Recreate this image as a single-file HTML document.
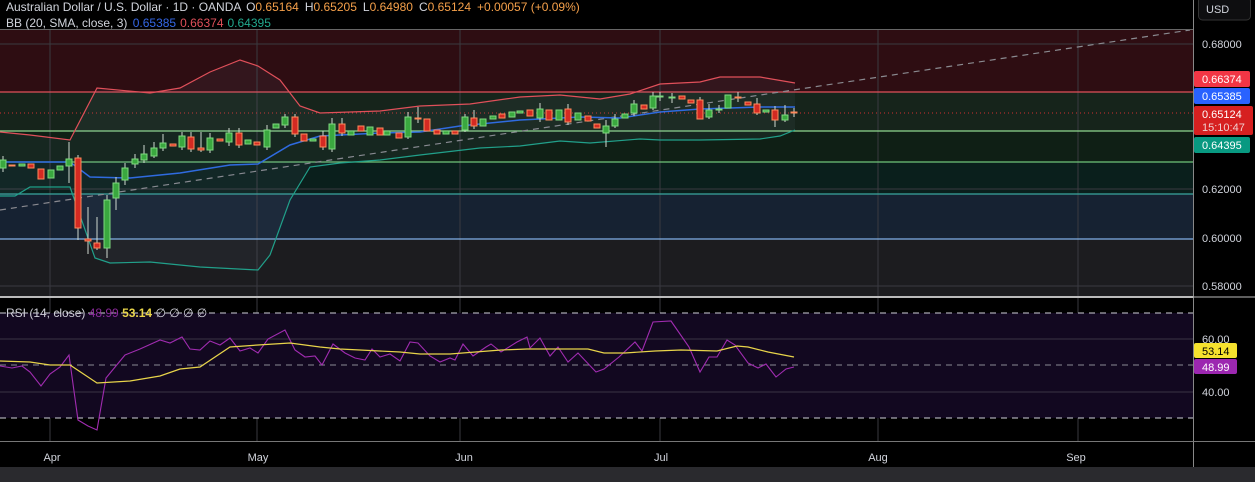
<!DOCTYPE html>
<html><head><meta charset="utf-8"><style>
html,body{margin:0;padding:0;background:#000;width:1255px;height:482px;overflow:hidden}
svg{display:block;font-family:"Liberation Sans",sans-serif}
</style></head><body>
<svg width="1255" height="482" viewBox="0 0 1255 482" xmlns="http://www.w3.org/2000/svg">
<rect width="1255" height="482" fill="#000"/>
<rect x="0" y="29" width="1193" height="63" fill="#2e0d12"/>
<rect x="0" y="92" width="1193" height="39" fill="#16241b"/>
<rect x="0" y="131" width="1193" height="31" fill="#0f1f15"/>
<rect x="0" y="162" width="1193" height="32" fill="#0a1f1c"/>
<rect x="0" y="194" width="1193" height="45" fill="#162232"/>
<rect x="0" y="239" width="1193" height="57" fill="#1c1c1f"/>
<g stroke="#3a3a40" stroke-width="1">
<line x1="50" y1="29" x2="50" y2="441"/><line x1="257" y1="29" x2="257" y2="441"/><line x1="460" y1="29" x2="460" y2="441"/><line x1="660" y1="29" x2="660" y2="441"/><line x1="878" y1="29" x2="878" y2="441"/><line x1="1078" y1="29" x2="1078" y2="441"/>
<line x1="0" y1="44" x2="1193" y2="44"/><line x1="0" y1="189" x2="1193" y2="189"/><line x1="0" y1="286" x2="1193" y2="286"/>
</g>
<line x1="0" y1="92" x2="1193" y2="92" stroke="#e0505a" stroke-width="1.2"/>
<line x1="0" y1="131" x2="1193" y2="131" stroke="#8fd88f" stroke-width="1.2"/>
<line x1="0" y1="162" x2="1193" y2="162" stroke="#6fc47a" stroke-width="1.2"/>
<line x1="0" y1="194" x2="1193" y2="194" stroke="#3aa7a0" stroke-width="1.2"/>
<line x1="0" y1="239" x2="1193" y2="239" stroke="#7fb0e8" stroke-width="1.2"/>
<line x1="0" y1="113" x2="1193" y2="113" stroke="#d03030" stroke-width="1" stroke-dasharray="1,3"/>
<line x1="0" y1="210" x2="1190" y2="30" stroke="#8a8a90" stroke-width="1.2" stroke-dasharray="6,5"/>
<polygon fill="rgba(120,140,160,0.08)" points="0,132 30,135 70,140 97,88 150,93 180,88 210,72 240,60 258,66 280,80 300,106 320,113 380,111 420,106 470,104 520,97 560,95 600,99 630,94 660,84 700,82 720,77 760,77 795,83 795,130 780,136 760,139 700,140 660,140 640,139 590,143 560,141 520,146 480,148 420,155 380,160 340,163 310,167 290,200 270,255 258,270 200,267 150,262 110,263 95,258 70,187 30,187 15,196 0,196"/>
<polyline fill="none" stroke="#e0505a" stroke-width="1.2" points="0,132 30,135 70,140 97,88 150,93 180,88 210,72 240,60 258,66 280,80 300,106 320,113 380,111 420,106 470,104 520,97 560,95 600,99 630,94 660,84 700,82 720,77 760,77 795,83"/>
<polyline fill="none" stroke="#2f6be0" stroke-width="1.5" points="0,162 70,162 90,177 130,178 180,173 230,165 258,164 290,145 320,136 380,133 420,132 460,126 520,120 580,117 620,118 660,112 700,109 760,107 795,107"/>
<polyline fill="none" stroke="#21a08a" stroke-width="1.2" points="0,196 15,196 30,187 70,187 95,258 110,263 150,262 200,267 258,270 270,255 290,200 310,167 340,163 380,160 420,155 480,148 520,146 560,141 590,143 640,139 660,140 700,140 760,139 780,136 795,130"/>
<g stroke-width="1">
<g stroke="#cfd8cf"><line x1="3" y1="156" x2="3" y2="172"/><line x1="69" y1="142" x2="69" y2="183"/><line x1="78" y1="155" x2="78" y2="240"/><line x1="88" y1="207" x2="88" y2="254"/><line x1="97" y1="217" x2="97" y2="250"/><line x1="107" y1="195" x2="107" y2="258"/><line x1="116" y1="177" x2="116" y2="210"/><line x1="125" y1="163" x2="125" y2="185"/><line x1="135" y1="154" x2="135" y2="168"/><line x1="144" y1="145" x2="144" y2="163"/><line x1="154" y1="142" x2="154" y2="158"/><line x1="163" y1="134" x2="163" y2="151"/><line x1="182" y1="132" x2="182" y2="150"/><line x1="191" y1="132" x2="191" y2="152"/><line x1="201" y1="132" x2="201" y2="152"/><line x1="210" y1="133" x2="210" y2="153"/><line x1="229" y1="128" x2="229" y2="146"/><line x1="239" y1="128" x2="239" y2="148"/><line x1="267" y1="125" x2="267" y2="150"/><line x1="285" y1="114" x2="285" y2="128"/><line x1="295" y1="114" x2="295" y2="137"/><line x1="323" y1="131" x2="323" y2="150"/><line x1="332" y1="118" x2="332" y2="152"/><line x1="342" y1="118" x2="342" y2="136"/><line x1="408" y1="112" x2="408" y2="139"/><line x1="418" y1="107" x2="418" y2="123"/><line x1="465" y1="114" x2="465" y2="132"/><line x1="474" y1="110" x2="474" y2="129"/><line x1="540" y1="103" x2="540" y2="122"/><line x1="568" y1="104" x2="568" y2="125"/><line x1="606" y1="120" x2="606" y2="147"/><line x1="615" y1="114" x2="615" y2="128"/><line x1="634" y1="100" x2="634" y2="116"/><line x1="653" y1="92" x2="653" y2="110"/><line x1="660" y1="92" x2="660" y2="101"/><line x1="672" y1="93" x2="672" y2="103"/><line x1="700" y1="97" x2="700" y2="119"/><line x1="709" y1="104" x2="709" y2="119"/><line x1="719" y1="105" x2="719" y2="113"/><line x1="738" y1="92" x2="738" y2="102"/><line x1="757" y1="98" x2="757" y2="115"/><line x1="775" y1="106" x2="775" y2="127"/><line x1="785" y1="105" x2="785" y2="122"/><line x1="794" y1="108" x2="794" y2="117"/></g>
<g fill="#3aa83f" stroke="#7fd97f">
<rect x="0" y="160" width="6" height="8"/><rect x="19" y="164" width="6" height="2"/><rect x="48" y="170" width="6" height="8"/><rect x="57" y="166" width="6" height="4"/><rect x="66" y="159" width="6" height="7"/><rect x="104" y="200" width="6" height="48"/><rect x="113" y="183" width="6" height="15"/><rect x="122" y="168" width="6" height="12"/><rect x="132" y="159" width="6" height="5"/><rect x="141" y="154" width="6" height="6"/><rect x="151" y="148" width="6" height="8"/><rect x="160" y="143" width="6" height="5"/><rect x="179" y="136" width="6" height="11"/><rect x="207" y="138" width="6" height="12"/><rect x="226" y="133" width="6" height="9"/><rect x="245" y="140" width="6" height="4"/><rect x="264" y="130" width="6" height="17"/><rect x="273" y="124" width="6" height="4"/><rect x="282" y="117" width="6" height="8"/><rect x="310" y="139" width="6" height="2"/><rect x="329" y="124" width="6" height="25"/><rect x="348" y="131" width="6" height="4"/><rect x="367" y="127" width="6" height="8"/><rect x="384" y="131" width="6" height="4"/><rect x="405" y="117" width="6" height="20"/><rect x="443" y="131" width="6" height="3"/><rect x="462" y="117" width="6" height="13"/><rect x="480" y="119" width="6" height="7"/><rect x="490" y="116" width="6" height="3"/><rect x="509" y="112" width="6" height="5"/><rect x="517" y="111" width="6" height="2"/><rect x="537" y="109" width="6" height="9"/><rect x="556" y="110" width="6" height="10"/><rect x="575" y="113" width="6" height="7"/><rect x="603" y="126" width="6" height="7"/><rect x="612" y="119" width="6" height="7"/><rect x="622" y="114" width="6" height="4"/><rect x="631" y="104" width="6" height="9"/><rect x="650" y="96" width="6" height="12"/><rect x="657" y="96" width="6" height="1"/><rect x="669" y="97" width="6" height="1"/><rect x="706" y="110" width="6" height="7"/><rect x="716" y="109" width="6" height="1"/><rect x="725" y="95" width="6" height="13"/><rect x="763" y="110" width="6" height="2"/><rect x="782" y="115" width="6" height="5"/>
</g>
<g fill="#d42a22" stroke="#ff8a5c">
<rect x="9" y="165" width="6" height="1"/><rect x="28" y="164" width="6" height="4"/><rect x="38" y="169" width="6" height="10"/><rect x="75" y="158" width="6" height="70"/><rect x="85" y="239" width="6" height="2"/><rect x="94" y="243" width="6" height="5"/><rect x="170" y="144" width="6" height="2"/><rect x="188" y="137" width="6" height="12"/><rect x="198" y="148" width="6" height="2"/><rect x="217" y="139" width="6" height="2"/><rect x="236" y="133" width="6" height="12"/><rect x="254" y="142" width="6" height="3"/><rect x="292" y="117" width="6" height="17"/><rect x="301" y="134" width="6" height="7"/><rect x="320" y="136" width="6" height="11"/><rect x="339" y="124" width="6" height="9"/><rect x="358" y="126" width="6" height="5"/><rect x="377" y="128" width="6" height="7"/><rect x="396" y="133" width="6" height="5"/><rect x="415" y="118" width="6" height="1"/><rect x="424" y="119" width="6" height="12"/><rect x="434" y="130" width="6" height="4"/><rect x="452" y="131" width="6" height="3"/><rect x="471" y="118" width="6" height="8"/><rect x="499" y="114" width="6" height="4"/><rect x="527" y="110" width="6" height="6"/><rect x="546" y="110" width="6" height="10"/><rect x="565" y="109" width="6" height="13"/><rect x="585" y="116" width="6" height="5"/><rect x="594" y="124" width="6" height="4"/><rect x="641" y="105" width="6" height="4"/><rect x="679" y="96" width="6" height="3"/><rect x="688" y="100" width="6" height="3"/><rect x="697" y="100" width="6" height="19"/><rect x="735" y="97" width="6" height="1"/><rect x="745" y="102" width="6" height="3"/><rect x="754" y="104" width="6" height="9"/><rect x="772" y="110" width="6" height="10"/><rect x="791" y="112" width="6" height="1"/>
</g>
</g>
<rect x="0" y="0" width="1193" height="29" fill="#000"/>
<line x1="0" y1="29.5" x2="1193" y2="29.5" stroke="#666" stroke-width="1"/>
<text x="6" y="11" font-size="12" fill="#d1d4dc">Australian Dollar / U.S. Dollar · 1D · OANDA <tspan dx="2">O</tspan><tspan fill="#f5a04a">0.65164</tspan><tspan dx="6">H</tspan><tspan fill="#f5a04a">0.65205</tspan><tspan dx="6">L</tspan><tspan fill="#f5a04a">0.64980</tspan><tspan dx="6">C</tspan><tspan fill="#f5a04a">0.65124</tspan><tspan dx="6" fill="#f5a04a">+0.00057 (+0.09%)</tspan></text>
<text x="6" y="27" font-size="12" fill="#d1d4dc">BB (20, SMA, close, 3) <tspan dx="2" fill="#3568e8">0.65385</tspan><tspan dx="4" fill="#e0505a">0.66374</tspan><tspan dx="4" fill="#22a98e">0.64395</tspan></text>
<rect x="0" y="296" width="1193" height="2" fill="#bbb"/>
<rect x="0" y="313" width="1193" height="105" fill="#120820"/>
<g stroke="#3a3345"><line x1="0" y1="339" x2="1193" y2="339"/><line x1="0" y1="392" x2="1193" y2="392"/></g>
<g stroke="#cfcfd8" stroke-dasharray="6,5"><line x1="0" y1="313" x2="1193" y2="313"/><line x1="0" y1="418" x2="1193" y2="418"/></g>
<line x1="0" y1="365" x2="1193" y2="365" stroke="#8a8a95" stroke-dasharray="6,5"/>
<polyline fill="none" stroke="#a02cb0" stroke-width="1.1" points="0,366 12,368 22,366 30,372 41,386 50,374 60,367 69,355 78,420 88,426 97,430 106,378 125,355 140,349 160,340 170,343 182,337 190,349 200,350 210,341 220,345 230,338 240,351 250,348 258,353 268,339 285,330 295,350 305,357 315,356 322,365 333,344 345,353 355,358 365,360 372,349 380,357 390,354 400,361 410,342 418,343 430,356 440,362 450,358 455,360 463,344 473,356 486,347 491,344 501,352 517,342 527,337 530,348 540,338 550,356 558,347 568,362 578,353 596,372 604,369 619,357 635,342 642,351 653,322 671,321 689,347 700,372 709,357 717,357 727,340 735,345 748,363 758,368 766,364 776,377 786,369 794,367"/>
<polyline fill="none" stroke="#e8d44a" stroke-width="1.2" points="0,361 30,362 50,365 70,365 97,383 130,381 160,376 180,369 200,367 230,347 258,345 290,343 320,347 340,349 360,350 400,352 420,354 450,354 501,350 527,349 588,349 604,353 625,353 655,351 681,350 717,351 737,346 748,347 768,352 794,357"/>
<text x="6" y="317" font-size="12" fill="#cfcfd8">RSI (14, close) <tspan fill="#8a2a9a">48.99</tspan> <tspan fill="#e8d44a" font-weight="bold">53.14</tspan> ∅ ∅ ∅ ∅</text>
<line x1="0" y1="441.5" x2="1193" y2="441.5" stroke="#777"/>
<g font-size="11" fill="#d1d4dc" text-anchor="middle"><text x="52" y="461">Apr</text><text x="258" y="461">May</text><text x="464" y="461">Jun</text><text x="661" y="461">Jul</text><text x="878" y="461">Aug</text><text x="1076" y="461">Sep</text></g>
<rect x="0" y="467" width="1255" height="15" fill="#2a2a2e"/>
<line x1="1193.5" y1="0" x2="1193.5" y2="467" stroke="#888"/>
<line x1="1193" y1="297" x2="1255" y2="297" stroke="#bbb"/>
<line x1="1193" y1="441.5" x2="1255" y2="441.5" stroke="#777"/>
<rect x="1198.5" y="-3" width="52" height="23" rx="4" fill="#0e0e10" stroke="#333"/>
<text x="1206" y="13" font-size="11" fill="#d1d4dc">USD</text>
<g font-size="11" fill="#d1d4dc"><text x="1202" y="48">0.68000</text><text x="1202" y="193">0.62000</text><text x="1202" y="242">0.60000</text><text x="1202" y="290">0.58000</text><text x="1202" y="343">60.00</text><text x="1202" y="396">40.00</text></g>
<rect x="1194" y="71" width="56" height="16" rx="2" fill="#f23645"/>
<rect x="1194" y="88" width="56" height="16" rx="2" fill="#2962ff"/>
<rect x="1194" y="106" width="59" height="29" rx="2" fill="#d62020"/>
<rect x="1194" y="137" width="56" height="16" rx="2" fill="#089981"/>
<g font-size="11" fill="#fff"><text x="1202" y="83">0.66374</text><text x="1202" y="100">0.65385</text><text x="1202" y="118">0.65124</text><text x="1202" y="131" fill="#f0d0d0">15:10:47</text><text x="1202" y="149">0.64395</text></g>
<rect x="1194" y="343" width="43" height="15" rx="2" fill="#f5e12e"/>
<rect x="1194" y="359" width="43" height="15" rx="2" fill="#9c27b0"/>
<text x="1202" y="355" font-size="11" fill="#000">53.14</text>
<text x="1202" y="371" font-size="11" fill="#fff">48.99</text>
</svg>
</body></html>
